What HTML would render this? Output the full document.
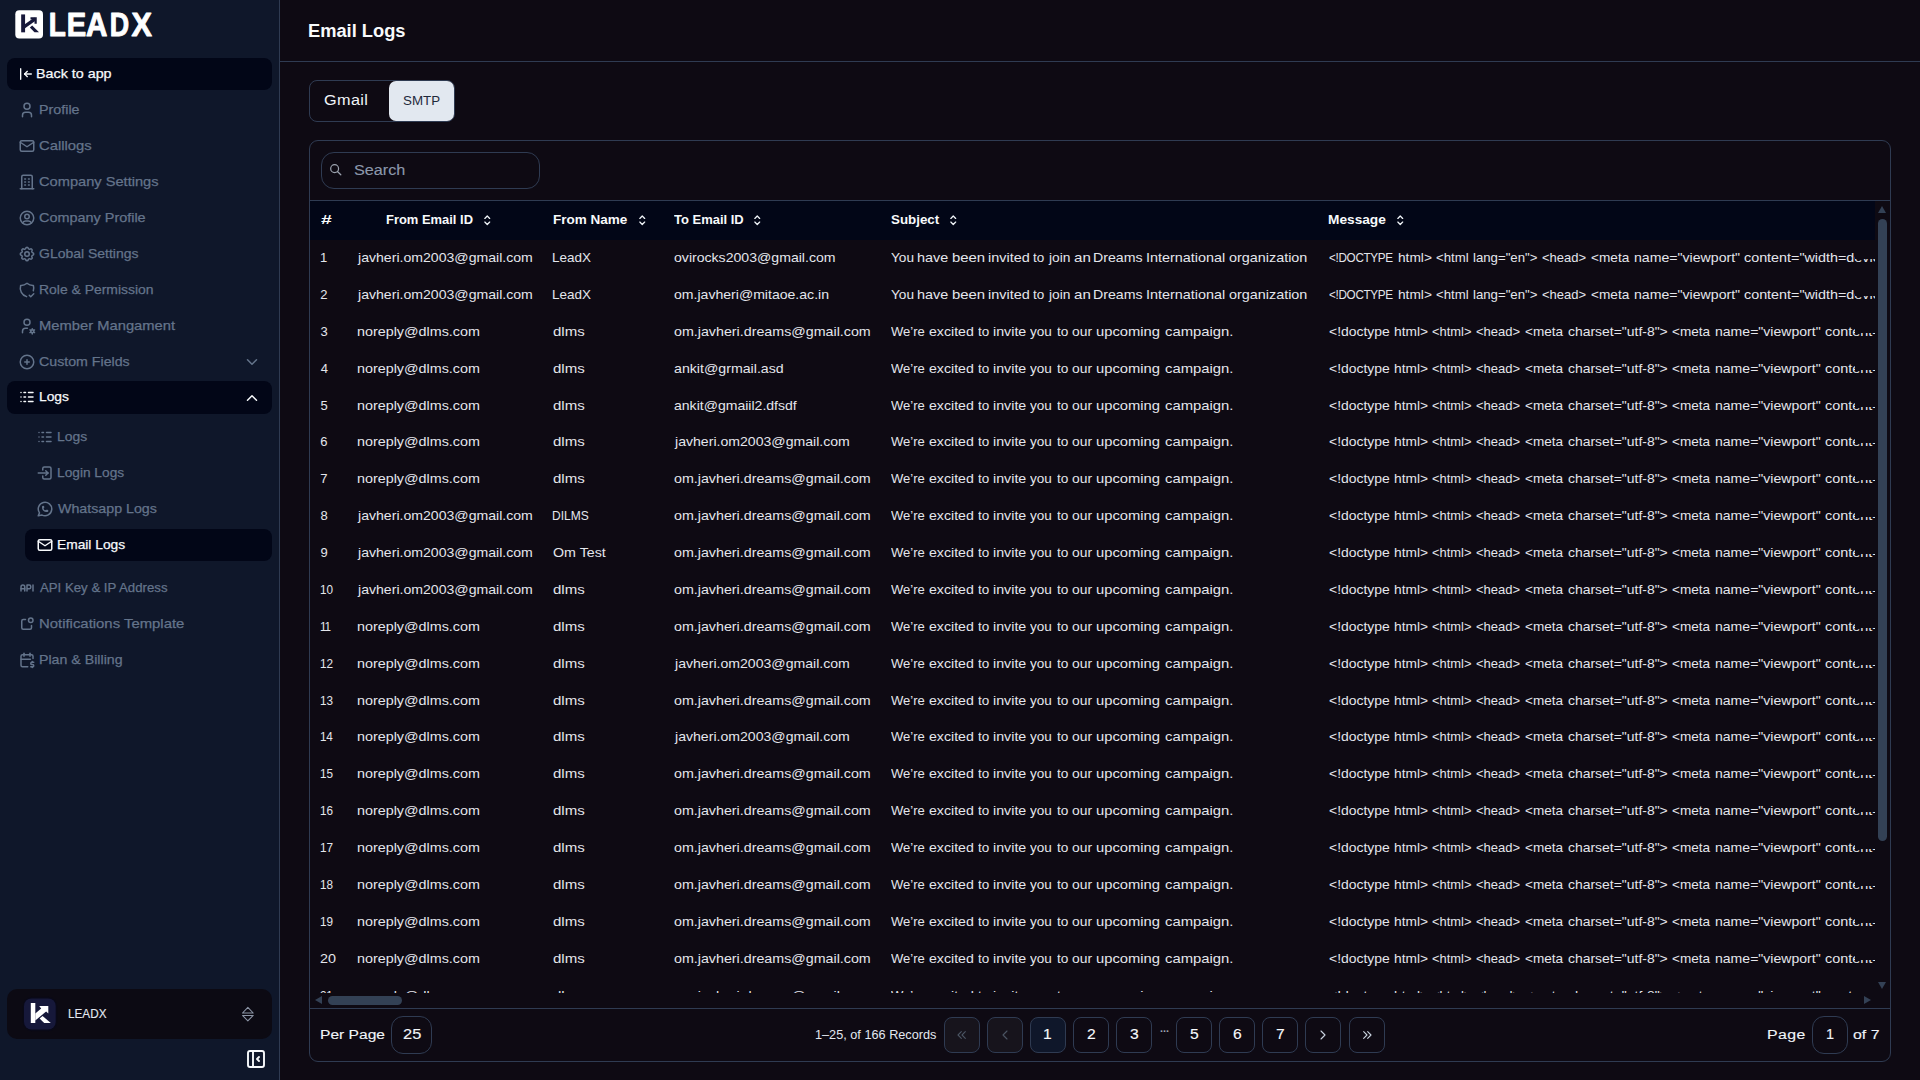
<!DOCTYPE html>
<html lang="en"><head><meta charset="utf-8"><title>Email Logs</title>
<style>
*{box-sizing:border-box;margin:0;padding:0}
html,body{width:1920px;height:1080px;overflow:hidden;background:#0e0a13;font-family:"Liberation Sans",sans-serif;font-variant-ligatures:none}
body{position:relative}
svg,.t,.act,.box,.pb{position:absolute}
svg{display:block;overflow:visible}
.t{white-space:pre;line-height:20px;height:20px;display:block;transform-origin:0 0}
.md{-webkit-text-stroke:0.12px currentColor}
.ms{-webkit-text-stroke:0.25px currentColor}
#side{position:absolute;left:0;top:0;width:280px;height:1080px;background:#0f172a;border-right:1px solid #2f3b52}
.act{height:32px;background:#020617;border-radius:8px}
#org{position:absolute;left:7px;top:989px;width:265px;height:50px;background:#0c0a13;border-radius:10px}
#hdrline{position:absolute;left:280px;top:61px;width:1640px;height:1px;background:#2f3b52}
#tabs{position:absolute;left:309px;top:80px;width:146px;height:42px;border:1px solid #2f3b52;border-radius:8px}
#tabact{position:absolute;left:79px;top:0;width:65px;height:40px;background:#e2e8f0;border-radius:7px}
#card{position:absolute;left:309px;top:140px;width:1582px;height:922px;border:1px solid #2f3b52;border-radius:9px}
#search{position:absolute;left:321px;top:152px;width:219px;height:37px;border:1px solid #2f3b52;border-radius:13px}
#thead{position:absolute;left:310px;top:200px;width:1580px;height:40px;border-top:1px solid #2f3b52;background:linear-gradient(#020617,#020617) no-repeat 0 0/1565px 100%}
#tbody{position:absolute;left:310px;top:201px;width:1565px;height:792px;overflow:hidden}
#vsb{position:absolute;left:1875px;top:201px;width:15px;height:792px}
#vsb b{position:absolute;left:3px;top:18px;width:9px;height:622px;border-radius:5px;background:#334155}
#vsb i,#hsb i{position:absolute;width:0;height:0;border:4.5px solid transparent}
#vsb .up{left:3px;top:0.5px;border-bottom:7px solid #334155;border-top-width:4.5px}
#vsb .dn{left:3px;top:781px;border-top:7px solid #334155;border-bottom-width:0}
#hsb{position:absolute;left:310px;top:993px;width:1565px;height:15px}
#hsb b{position:absolute;left:18px;top:3px;width:74px;height:9px;border-radius:5px;background:#334155}
#hsb .lf{left:4.6px;top:3px;border-right:7px solid #334155;border-left-width:0}
#hsb .rt{left:1553.5px;top:3px;border-left:7px solid #334155;border-right-width:0}
#footline{position:absolute;left:310px;top:1008px;width:1580px;height:1px;background:#2f3b52}
.clip{position:absolute;left:1544.5px;width:21px;height:9.7px;background:#0e0a13}
.box{border:1px solid #2f3b52}
.pb{top:1017px;width:36px;height:36px;border:1px solid #2f3b52;border-radius:8px}
.pa{background:#0f172a}
.pd{background:#17141c}
</style></head>
<body>
<div id="side">
<svg style="left:15px;top:10px" width="140" height="30" viewBox="0 0 140 30">
<rect x="0.3" y="0.3" width="27.7" height="28.3" rx="4" fill="#fff"/>
<g fill="#17183a"><rect x="6.17" y="4.42" width="3.91" height="17.91"/>
<path d="M8 17.7 20.3 8.8" stroke="#17183a" stroke-width="3.3" fill="none"/>
<path d="M15.5 7.33H21.75V13.75H19.5V9.58H15.5z"/>
<path d="M14.83 17.58 17.17 15.5 24 22.33H19.5z"/></g>
<g font-family="Liberation Sans" font-weight="700" font-size="33.14" fill="#fff" stroke="#fff" stroke-width="1.0" stroke-linejoin="round"><text transform="translate(33.75,25.60) scale(0.8437,1)">L</text><text transform="translate(51.77,25.60) scale(0.8806,1)">E</text><text transform="translate(71.09,25.60) scale(0.8936,1)">A</text><text transform="translate(94.63,25.60) scale(0.8096,1)">D</text><text transform="translate(116.56,25.60) scale(0.9224,1)">X</text></g>
</svg>
<div class="act" style="left:7px;top:58px;width:265px"></div>
<svg style="left:17.8px;top:66.4px;color:#f8fafc;" width="16" height="16" viewBox="0 0 24 24" fill="none" stroke="currentColor" stroke-width="2" stroke-linecap="round" stroke-linejoin="round"><path d="M10 12l10 0"/><path d="M10 12l4 4"/><path d="M10 12l4 -4"/><path d="M4 4l0 16"/></svg>
<span class="t ms" style="left:36.03px;top:64px;font-size:13.2px;transform:scaleX(1.0848);color:#f8fafc;">Back to app</span>
<svg style="left:18px;top:101px;color:#64748b;" width="18" height="18" viewBox="0 0 24 24" fill="none" stroke="currentColor" stroke-width="2" stroke-linecap="round" stroke-linejoin="round"><path d="M8 7a4 4 0 1 0 8 0a4 4 0 0 0 -8 0"/><path d="M6 21v-2a4 4 0 0 1 4 -4h4a4 4 0 0 1 4 4v2"/></svg>
<span class="t ms" style="left:38.63px;top:100px;font-size:13.6px;transform:scaleX(1.0512);color:#64748b;">Profile</span>
<svg style="left:18px;top:137px;color:#64748b;" width="18" height="18" viewBox="0 0 24 24" fill="none" stroke="currentColor" stroke-width="2" stroke-linecap="round" stroke-linejoin="round"><path d="M3 7a2 2 0 0 1 2 -2h14a2 2 0 0 1 2 2v10a2 2 0 0 1 -2 2h-14a2 2 0 0 1 -2 -2v-10z"/><path d="M3 7l9 6l9 -6"/></svg>
<span class="t ms" style="left:39.06px;top:136px;font-size:13.6px;transform:scaleX(1.0913);color:#64748b;">Calllogs</span>
<svg style="left:18px;top:173px;color:#64748b;" width="18" height="18" viewBox="0 0 24 24" fill="none" stroke="currentColor" stroke-width="2" stroke-linecap="round" stroke-linejoin="round"><path d="M3 21l18 0"/><path d="M9 8l1 0"/><path d="M9 12l1 0"/><path d="M9 16l1 0"/><path d="M14 8l1 0"/><path d="M14 12l1 0"/><path d="M14 16l1 0"/><path d="M5 21v-16a2 2 0 0 1 2 -2h10a2 2 0 0 1 2 2v16"/></svg>
<span class="t ms" style="left:39.07px;top:172px;font-size:13.6px;transform:scaleX(1.0763);color:#64748b;">Company Settings</span>
<svg style="left:18px;top:209px;color:#64748b;" width="18" height="18" viewBox="0 0 24 24" fill="none" stroke="currentColor" stroke-width="2" stroke-linecap="round" stroke-linejoin="round"><path d="M12 12m-9 0a9 9 0 1 0 18 0a9 9 0 1 0 -18 0"/><path d="M12 10m-3 0a3 3 0 1 0 6 0a3 3 0 1 0 -6 0"/><path d="M6.168 18.849a4 4 0 0 1 3.832 -2.849h4a4 4 0 0 1 3.834 2.855"/></svg>
<span class="t ms" style="left:39.08px;top:208px;font-size:13.6px;transform:scaleX(1.0613);color:#64748b;">Company Profile</span>
<svg style="left:18px;top:245px;color:#64748b;" width="18" height="18" viewBox="0 0 24 24" fill="none" stroke="currentColor" stroke-width="2" stroke-linecap="round" stroke-linejoin="round"><path d="M10.325 4.317c.426 -1.756 2.924 -1.756 3.35 0a1.724 1.724 0 0 0 2.573 1.066c1.543 -.94 3.31 .826 2.37 2.37a1.724 1.724 0 0 0 1.065 2.572c1.756 .426 1.756 2.924 0 3.35a1.724 1.724 0 0 0 -1.066 2.573c.94 1.543 -.826 3.31 -2.37 2.37a1.724 1.724 0 0 0 -2.572 1.065c-.426 1.756 -2.924 1.756 -3.35 0a1.724 1.724 0 0 0 -2.573 -1.066c-1.543 .94 -3.31 -.826 -2.37 -2.37a1.724 1.724 0 0 0 -1.065 -2.572c-1.756 -.426 -1.756 -2.924 0 -3.35a1.724 1.724 0 0 0 1.066 -2.573c-.94 -1.543 .826 -3.31 2.37 -2.37c1 .608 2.296 .07 2.572 -1.065z"/><path d="M9 12a3 3 0 1 0 6 0a3 3 0 0 0 -6 0"/></svg>
<span class="t ms" style="left:39.1px;top:244px;font-size:13.6px;transform:scaleX(1.0286);color:#64748b;">GLobal Settings</span>
<svg style="left:18px;top:281px;color:#64748b;" width="18" height="18" viewBox="0 0 24 24" fill="none" stroke="currentColor" stroke-width="2" stroke-linecap="round" stroke-linejoin="round"><path d="M11.46 20.846a12 12 0 0 1 -7.96 -14.846a12 12 0 0 0 8.5 -3a12 12 0 0 0 8.5 3a12 12 0 0 1 -.09 7.06"/><path d="M15 19l2 2l4 -4"/></svg>
<span class="t ms" style="left:38.66px;top:280px;font-size:13.6px;transform:scaleX(1.0244);color:#64748b;">Role &amp; Permission</span>
<svg style="left:18px;top:317px;color:#64748b;" width="18" height="18" viewBox="0 0 24 24" fill="none" stroke="currentColor" stroke-width="2" stroke-linecap="round" stroke-linejoin="round"><path d="M8 7a4 4 0 1 0 8 0a4 4 0 0 0 -8 0"/><path d="M6 21v-2a4 4 0 0 1 4 -4h2.5"/><path d="M19.001 19m-2 0a2 2 0 1 0 4 0a2 2 0 1 0 -4 0"/><path d="M19.001 15.5v1.5"/><path d="M19.001 21v1.5"/><path d="M22.032 17.25l-1.299 .75"/><path d="M17.27 20l-1.3 .75"/><path d="M15.97 17.25l1.3 .75"/><path d="M20.733 20l1.3 .75"/></svg>
<span class="t ms" style="left:38.59px;top:316px;font-size:13.6px;transform:scaleX(1.0852);color:#64748b;">Member Mangament</span>
<svg style="left:18px;top:353px;color:#64748b;" width="18" height="18" viewBox="0 0 24 24" fill="none" stroke="currentColor" stroke-width="2" stroke-linecap="round" stroke-linejoin="round"><path d="M3 12a9 9 0 1 0 18 0a9 9 0 0 0 -18 0"/><path d="M9 12h6"/><path d="M12 9v6"/></svg>
<span class="t ms" style="left:39.09px;top:352px;font-size:13.6px;transform:scaleX(1.0443);color:#64748b;">Custom Fields</span>
<svg style="left:243px;top:353px;color:#64748b;" width="18" height="18" viewBox="0 0 24 24" fill="none" stroke="currentColor" stroke-width="2" stroke-linecap="round" stroke-linejoin="round"><path d="M6 9l6 6l6 -6"/></svg>
<div class="act" style="left:7px;top:381px;width:265px;height:33px"></div>
<svg style="left:18px;top:388px;color:#f8fafc;" width="18" height="18" viewBox="0 0 24 24" fill="none" stroke="currentColor" stroke-width="2" stroke-linecap="round" stroke-linejoin="round"><path d="M4 12h.01"/><path d="M4 6h.01"/><path d="M4 18h.01"/><path d="M8 18h2"/><path d="M8 12h2"/><path d="M8 6h2"/><path d="M14 6h6"/><path d="M14 12h6"/><path d="M14 18h6"/></svg>
<span class="t ms" style="left:38.67px;top:387px;font-size:13.6px;transform:scaleX(1.0151);color:#f8fafc;">Logs</span>
<svg style="left:243px;top:388.5px;color:#f8fafc;" width="18" height="18" viewBox="0 0 24 24" fill="none" stroke="currentColor" stroke-width="2" stroke-linecap="round" stroke-linejoin="round"><path d="M6 15l6 -6l6 6"/></svg>
<svg style="left:36px;top:428px;color:#64748b;" width="18" height="18" viewBox="0 0 24 24" fill="none" stroke="currentColor" stroke-width="2" stroke-linecap="round" stroke-linejoin="round"><path d="M4 12h.01"/><path d="M4 6h.01"/><path d="M4 18h.01"/><path d="M8 18h2"/><path d="M8 12h2"/><path d="M8 6h2"/><path d="M14 6h6"/><path d="M14 12h6"/><path d="M14 18h6"/></svg>
<span class="t ms" style="left:56.86px;top:427px;font-size:13.6px;transform:scaleX(1.0223);color:#64748b;">Logs</span>
<svg style="left:36px;top:464px;color:#64748b;" width="18" height="18" viewBox="0 0 24 24" fill="none" stroke="currentColor" stroke-width="2" stroke-linecap="round" stroke-linejoin="round"><path d="M9 8v-2a2 2 0 0 1 2 -2h7a2 2 0 0 1 2 2v12a2 2 0 0 1 -2 2h-7a2 2 0 0 1 -2 -2v-2"/><path d="M3 12h13l-3 -3"/><path d="M13 15l3 -3"/></svg>
<span class="t ms" style="left:56.87px;top:463px;font-size:13.6px;transform:scaleX(1.0091);color:#64748b;">Login Logs</span>
<svg style="left:36px;top:500px;color:#64748b;" width="18" height="18" viewBox="0 0 24 24" fill="none" stroke="currentColor" stroke-width="2" stroke-linecap="round" stroke-linejoin="round"><path d="M3 21l1.65 -3.8a9 9 0 1 1 3.4 2.9l-5.05 .9"/><path d="M9 10a.5 .5 0 0 0 1 0v-1a.5 .5 0 0 0 -1 0v1a5 5 0 0 0 5 5h1a.5 .5 0 0 0 0 -1h-1a.5 .5 0 0 0 0 1"/></svg>
<span class="t ms" style="left:57.94px;top:499px;font-size:13.6px;transform:scaleX(1.0466);color:#64748b;">Whatsapp Logs</span>
<div class="act" style="left:25px;top:529px;width:247px"></div>
<svg style="left:36px;top:536px;color:#f8fafc;" width="18" height="18" viewBox="0 0 24 24" fill="none" stroke="currentColor" stroke-width="2" stroke-linecap="round" stroke-linejoin="round"><path d="M3 7a2 2 0 0 1 2 -2h14a2 2 0 0 1 2 2v10a2 2 0 0 1 -2 2h-14a2 2 0 0 1 -2 -2v-10z"/><path d="M3 7l9 6l9 -6"/></svg>
<span class="t ms" style="left:56.87px;top:535px;font-size:13.6px;transform:scaleX(1.013);color:#f8fafc;">Email Logs</span>
<svg style="left:18px;top:579px;color:#64748b;" width="18" height="18" viewBox="0 0 24 24" fill="none" stroke="currentColor" stroke-width="2" stroke-linecap="round" stroke-linejoin="round"><path d="M4 13h5"/><path d="M12 16v-8h3a2 2 0 0 1 2 2v1a2 2 0 0 1 -2 2h-3"/><path d="M20 8v8"/><path d="M9 16v-5.5a2.5 2.5 0 0 0 -5 0v5.5"/></svg>
<span class="t ms" style="left:40.17px;top:578px;font-size:13.6px;transform:scaleX(0.9716);color:#64748b;">API Key &amp; IP Address</span>
<svg style="left:18px;top:615px;color:#64748b;" width="18" height="18" viewBox="0 0 24 24" fill="none" stroke="currentColor" stroke-width="2" stroke-linecap="round" stroke-linejoin="round"><path d="M10 6h-3a2 2 0 0 0 -2 2v9a2 2 0 0 0 2 2h9a2 2 0 0 0 2 -2v-3"/><path d="M17 7m-3 0a3 3 0 1 0 6 0a3 3 0 1 0 -6 0"/></svg>
<span class="t ms" style="left:38.58px;top:614px;font-size:13.6px;transform:scaleX(1.0953);color:#64748b;">Notifications Template</span>
<svg style="left:18px;top:651px;color:#64748b;" width="18" height="18" viewBox="0 0 24 24" fill="none" stroke="currentColor" stroke-width="2" stroke-linecap="round" stroke-linejoin="round"><path d="M13 21h-7a2 2 0 0 1 -2 -2v-12a2 2 0 0 1 2 -2h12a2 2 0 0 1 2 2v3"/><path d="M16 3v4"/><path d="M8 3v4"/><path d="M4 11h12.5"/><path d="M21 15h-2.5a1.5 1.5 0 0 0 0 3h1a1.5 1.5 0 0 1 0 3h-2.5"/><path d="M19 21v1m0 -8v1"/></svg>
<span class="t ms" style="left:38.64px;top:650px;font-size:13.6px;transform:scaleX(1.0432);color:#64748b;">Plan &amp; Billing</span>
<div id="org"></div>
<svg style="left:22px;top:996px" width="36" height="36" viewBox="-2 -2 36 36">
<rect x="-1.2" y="-1.2" width="34.4" height="34.4" rx="9" fill="#080a1c" opacity=".55"/>
<rect x="0" y="0.4" width="31.7" height="31" rx="7.5" fill="#16183a"/>
<g fill="#fff"><rect x="6.8" y="5" width="4.5" height="20"/>
<path d="M11.3 15.6 17.2 10.4 15.2 8H24.3v7.6l-2.2-2.2-10.8 9.2z"/>
<path d="M15.6 20.6 18.6 18 26.8 25H20.2z"/></g>
</svg>
<span class="t md" style="left:67.94px;top:1004px;font-size:13px;transform:scaleX(0.9031);color:#e2e8f0;">LEADX</span>
<svg style="left:240px;top:1004px;color:#8c95a6" width="16" height="20" viewBox="0 0 16 20" fill="none" stroke="currentColor" stroke-width="1.05" stroke-linejoin="round"><path d="M7.85 3.3 13.2 9H2.5z"/><path d="M7.85 16.9 13.2 11.4H2.5z"/></svg>
<svg style="left:243.5px;top:1046.5px;color:#f8fafc;" width="24" height="24" viewBox="0 0 24 24" fill="none" stroke="currentColor" stroke-width="1.9" stroke-linecap="round" stroke-linejoin="round"><path d="M4 4m0 2a2 2 0 0 1 2 -2h12a2 2 0 0 1 2 2v12a2 2 0 0 1 -2 2h-12a2 2 0 0 1 -2 -2z"/><path d="M9 4v16"/><path d="M15 10l-2 2l2 2"/></svg>
</div>
<div id="hdrline"></div>
<span class="t" style="left:308.19px;top:21px;font-size:18px;font-weight:700;transform:scaleX(1.0157);color:#f8fafc;">Email Logs</span>
<div id="tabs"><div id="tabact"></div></div>
<span class="t" style="left:323.89px;top:90px;font-size:14px;letter-spacing:0.318px;transform:scaleX(1.16);color:#f1f5f9;">Gmail</span>
<span class="t" style="left:403.0px;top:91px;font-size:13.7px;transform:scaleX(0.9754);color:#1e293b;">SMTP</span>
<div id="card"></div>
<div id="search"></div>
<svg style="left:329.3px;top:163.3px;color:#9ca3af;" width="13.5" height="13.5" viewBox="0 0 24 24" fill="none" stroke="currentColor" stroke-width="2.2" stroke-linecap="round" stroke-linejoin="round"><path d="M10 10m-7 0a7 7 0 1 0 14 0a7 7 0 1 0 -14 0"/><path d="M21 21l-6 -6"/></svg>
<span class="t md" style="left:353.67px;top:160px;font-size:14.7px;transform:scaleX(1.1036);color:#8c98ab;">Search</span>
<div id="thead"></div>
<span class="t" style="left:320.67px;top:210px;font-size:12.6px;font-weight:700;transform:scaleX(1.543);color:#f8fafc;">#</span>
<span class="t" style="left:386.05px;top:210px;font-size:12.6px;font-weight:700;transform:scaleX(1.0272);color:#f8fafc;">From Email ID</span>
<svg style="left:479.95px;top:213.05px;color:#f1f5f9;" width="14.5" height="14.5" viewBox="0 0 24 24" fill="none" stroke="currentColor" stroke-width="2.1" stroke-linecap="round" stroke-linejoin="round"><path d="M8 9l4 -4l4 4"/><path d="M16 15l-4 4l-4 -4"/></svg>
<span class="t" style="left:553.11px;top:210px;font-size:12.6px;font-weight:700;transform:scaleX(1.073);color:#f8fafc;">From Name</span>
<svg style="left:635.0px;top:213.05px;color:#f1f5f9;" width="14.5" height="14.5" viewBox="0 0 24 24" fill="none" stroke="currentColor" stroke-width="2.1" stroke-linecap="round" stroke-linejoin="round"><path d="M8 9l4 -4l4 4"/><path d="M16 15l-4 4l-4 -4"/></svg>
<span class="t" style="left:674.06px;top:210px;font-size:12.6px;font-weight:700;transform:scaleX(1.0299);color:#f8fafc;">To Email ID</span>
<svg style="left:750.0px;top:213.05px;color:#f1f5f9;" width="14.5" height="14.5" viewBox="0 0 24 24" fill="none" stroke="currentColor" stroke-width="2.1" stroke-linecap="round" stroke-linejoin="round"><path d="M8 9l4 -4l4 4"/><path d="M16 15l-4 4l-4 -4"/></svg>
<span class="t" style="left:890.63px;top:210px;font-size:12.6px;font-weight:700;transform:scaleX(1.0601);color:#f8fafc;">Subject</span>
<svg style="left:946.0px;top:213.05px;color:#f1f5f9;" width="14.5" height="14.5" viewBox="0 0 24 24" fill="none" stroke="currentColor" stroke-width="2.1" stroke-linecap="round" stroke-linejoin="round"><path d="M8 9l4 -4l4 4"/><path d="M16 15l-4 4l-4 -4"/></svg>
<span class="t" style="left:1328.1px;top:210px;font-size:12.6px;font-weight:700;transform:scaleX(1.0874);color:#f8fafc;">Message</span>
<svg style="left:1392.95px;top:213.05px;color:#f1f5f9;" width="14.5" height="14.5" viewBox="0 0 24 24" fill="none" stroke="currentColor" stroke-width="2.1" stroke-linecap="round" stroke-linejoin="round"><path d="M8 9l4 -4l4 4"/><path d="M16 15l-4 4l-4 -4"/></svg>
<div id="tbody">
<span class="t" style="left:10.01px;top:47px;font-size:13px;color:#e4e6ec;">1</span>
<span class="t" style="left:47.55px;top:47px;font-size:13px;transform:scaleX(1.0839);color:#e4e6ec;">javheri.om2003@gmail.com</span>
<span class="t" style="left:242.1px;top:47px;font-size:13px;transform:scaleX(1.0343);color:#e4e6ec;">LeadX</span>
<span class="t" style="left:363.61px;top:47px;font-size:13px;transform:scaleX(1.0837);color:#e4e6ec;">ovirocks2003@gmail.com</span>
<span class="t" style="left:581.05px;top:47px;font-size:13px;transform:scaleX(1.0485);color:#e4e6ec;">You</span>
<span class="t" style="left:607.16px;top:47px;font-size:13px;transform:scaleX(1.1073);color:#e4e6ec;">have</span>
<span class="t" style="left:641.6px;top:47px;font-size:13px;transform:scaleX(1.1447);color:#e4e6ec;">been</span>
<span class="t" style="left:677.6px;top:47px;font-size:13px;transform:scaleX(1.1091);color:#e4e6ec;">invited</span>
<span class="t" style="left:723.25px;top:47px;font-size:13px;transform:scaleX(1.0382);color:#e4e6ec;">to</span>
<span class="t" style="left:739.09px;top:47px;font-size:13px;transform:scaleX(1.0587);color:#e4e6ec;">join</span>
<span class="t" style="left:764.02px;top:47px;font-size:13px;letter-spacing:0.015px;transform:scaleX(1.16);color:#e4e6ec;">an</span>
<span class="t" style="left:783.49px;top:47px;font-size:13px;transform:scaleX(1.0891);color:#e4e6ec;">Dreams</span>
<span class="t" style="left:836.03px;top:47px;font-size:13px;transform:scaleX(1.1078);color:#e4e6ec;">International</span>
<span class="t" style="left:918.75px;top:47px;font-size:13px;transform:scaleX(1.1059);color:#e4e6ec;">organization</span>
<span class="t" style="left:1019.18px;top:47px;font-size:13px;letter-spacing:-0.344px;transform:scaleX(0.9);color:#e4e6ec;">&lt;!DOCTYPE</span>
<span class="t" style="left:1087.5px;top:47px;font-size:13px;transform:scaleX(1.0543);color:#e4e6ec;">html&gt;</span>
<span class="t" style="left:1126.1px;top:47px;font-size:13px;transform:scaleX(1.0144);color:#e4e6ec;">&lt;html</span>
<span class="t" style="left:1163.37px;top:47px;font-size:13px;transform:scaleX(1.0152);color:#e4e6ec;">lang="en"&gt;</span>
<span class="t" style="left:1232.41px;top:47px;font-size:13px;transform:scaleX(0.9989);color:#e4e6ec;">&lt;head&gt;</span>
<span class="t" style="left:1281.48px;top:47px;font-size:13px;transform:scaleX(1.0481);color:#e4e6ec;">&lt;meta</span>
<span class="t" style="left:1324.12px;top:47px;font-size:13px;transform:scaleX(1.0857);color:#e4e6ec;">name="viewport"</span>
<span class="t" style="left:1433.85px;top:47px;font-size:13px;transform:scaleX(1.1032);color:#e4e6ec;">content="width=device</span>
<i class="clip" style="top:48px"></i>
<span class="t" style="left:10.35px;top:84px;font-size:13px;color:#e4e6ec;">2</span>
<span class="t" style="left:47.55px;top:84px;font-size:13px;transform:scaleX(1.0839);color:#e4e6ec;">javheri.om2003@gmail.com</span>
<span class="t" style="left:242.1px;top:84px;font-size:13px;transform:scaleX(1.0343);color:#e4e6ec;">LeadX</span>
<span class="t" style="left:363.61px;top:84px;font-size:13px;transform:scaleX(1.0819);color:#e4e6ec;">om.javheri@mitaoe.ac.in</span>
<span class="t" style="left:581.05px;top:84px;font-size:13px;transform:scaleX(1.0485);color:#e4e6ec;">You</span>
<span class="t" style="left:607.16px;top:84px;font-size:13px;transform:scaleX(1.1073);color:#e4e6ec;">have</span>
<span class="t" style="left:641.6px;top:84px;font-size:13px;transform:scaleX(1.1447);color:#e4e6ec;">been</span>
<span class="t" style="left:677.6px;top:84px;font-size:13px;transform:scaleX(1.1091);color:#e4e6ec;">invited</span>
<span class="t" style="left:723.25px;top:84px;font-size:13px;transform:scaleX(1.0382);color:#e4e6ec;">to</span>
<span class="t" style="left:739.09px;top:84px;font-size:13px;transform:scaleX(1.0587);color:#e4e6ec;">join</span>
<span class="t" style="left:764.02px;top:84px;font-size:13px;letter-spacing:0.015px;transform:scaleX(1.16);color:#e4e6ec;">an</span>
<span class="t" style="left:783.49px;top:84px;font-size:13px;transform:scaleX(1.0891);color:#e4e6ec;">Dreams</span>
<span class="t" style="left:836.03px;top:84px;font-size:13px;transform:scaleX(1.1078);color:#e4e6ec;">International</span>
<span class="t" style="left:918.75px;top:84px;font-size:13px;transform:scaleX(1.1059);color:#e4e6ec;">organization</span>
<span class="t" style="left:1019.18px;top:84px;font-size:13px;letter-spacing:-0.344px;transform:scaleX(0.9);color:#e4e6ec;">&lt;!DOCTYPE</span>
<span class="t" style="left:1087.5px;top:84px;font-size:13px;transform:scaleX(1.0543);color:#e4e6ec;">html&gt;</span>
<span class="t" style="left:1126.1px;top:84px;font-size:13px;transform:scaleX(1.0144);color:#e4e6ec;">&lt;html</span>
<span class="t" style="left:1163.37px;top:84px;font-size:13px;transform:scaleX(1.0152);color:#e4e6ec;">lang="en"&gt;</span>
<span class="t" style="left:1232.41px;top:84px;font-size:13px;transform:scaleX(0.9989);color:#e4e6ec;">&lt;head&gt;</span>
<span class="t" style="left:1281.48px;top:84px;font-size:13px;transform:scaleX(1.0481);color:#e4e6ec;">&lt;meta</span>
<span class="t" style="left:1324.12px;top:84px;font-size:13px;transform:scaleX(1.0857);color:#e4e6ec;">name="viewport"</span>
<span class="t" style="left:1433.85px;top:84px;font-size:13px;transform:scaleX(1.1032);color:#e4e6ec;">content="width=device</span>
<i class="clip" style="top:85px"></i>
<span class="t" style="left:10.51px;top:121px;font-size:13px;color:#e4e6ec;">3</span>
<span class="t" style="left:46.75px;top:121px;font-size:13px;transform:scaleX(1.1025);color:#e4e6ec;">noreply@dlms.com</span>
<span class="t" style="left:242.57px;top:121px;font-size:13px;transform:scaleX(1.1574);color:#e4e6ec;">dlms</span>
<span class="t" style="left:363.6px;top:121px;font-size:13px;transform:scaleX(1.0968);color:#e4e6ec;">om.javheri.dreams@gmail.com</span>
<span class="t" style="left:581.3px;top:121px;font-size:13px;transform:scaleX(1.0032);color:#e4e6ec;">We’re</span>
<span class="t" style="left:619.06px;top:121px;font-size:13px;transform:scaleX(1.0873);color:#e4e6ec;">excited</span>
<span class="t" style="left:667.55px;top:121px;font-size:13px;transform:scaleX(1.0382);color:#e4e6ec;">to</span>
<span class="t" style="left:682.81px;top:121px;font-size:13px;transform:scaleX(1.0958);color:#e4e6ec;">invite</span>
<span class="t" style="left:720.42px;top:121px;font-size:13px;transform:scaleX(1.0407);color:#e4e6ec;">you</span>
<span class="t" style="left:746.55px;top:121px;font-size:13px;transform:scaleX(1.0481);color:#e4e6ec;">to</span>
<span class="t" style="left:762.27px;top:121px;font-size:13px;transform:scaleX(1.0641);color:#e4e6ec;">our</span>
<span class="t" style="left:786.41px;top:121px;font-size:13px;transform:scaleX(1.1351);color:#e4e6ec;">upcoming</span>
<span class="t" style="left:854.53px;top:121px;font-size:13px;transform:scaleX(1.1415);color:#e4e6ec;">campaign.</span>
<span class="t" style="left:1019.07px;top:121px;font-size:13px;transform:scaleX(1.0713);color:#e4e6ec;">&lt;!doctype</span>
<span class="t" style="left:1083.9px;top:121px;font-size:13px;transform:scaleX(1.0576);color:#e4e6ec;">html&gt;</span>
<span class="t" style="left:1122.22px;top:121px;font-size:13px;transform:scaleX(0.9925);color:#e4e6ec;">&lt;html&gt;</span>
<span class="t" style="left:1166.41px;top:121px;font-size:13px;transform:scaleX(1.0012);color:#e4e6ec;">&lt;head&gt;</span>
<span class="t" style="left:1215.19px;top:121px;font-size:13px;transform:scaleX(1.0425);color:#e4e6ec;">&lt;meta</span>
<span class="t" style="left:1258.16px;top:121px;font-size:13px;transform:scaleX(1.0719);color:#e4e6ec;">charset="utf-8"&gt;</span>
<span class="t" style="left:1362.39px;top:121px;font-size:13px;transform:scaleX(1.0425);color:#e4e6ec;">&lt;meta</span>
<span class="t" style="left:1405.02px;top:121px;font-size:13px;transform:scaleX(1.0805);color:#e4e6ec;">name="viewport"</span>
<span class="t" style="left:1514.55px;top:121px;font-size:13px;transform:scaleX(1.1076);color:#e4e6ec;">content="w</span>
<i class="clip" style="top:122px"></i>
<span class="t" style="left:10.71px;top:158px;font-size:13px;color:#e4e6ec;">4</span>
<span class="t" style="left:46.75px;top:158px;font-size:13px;transform:scaleX(1.1025);color:#e4e6ec;">noreply@dlms.com</span>
<span class="t" style="left:242.57px;top:158px;font-size:13px;transform:scaleX(1.1574);color:#e4e6ec;">dlms</span>
<span class="t" style="left:363.6px;top:158px;font-size:13px;transform:scaleX(1.0902);color:#e4e6ec;">ankit@grmail.asd</span>
<span class="t" style="left:581.3px;top:158px;font-size:13px;transform:scaleX(1.0032);color:#e4e6ec;">We’re</span>
<span class="t" style="left:619.06px;top:158px;font-size:13px;transform:scaleX(1.0873);color:#e4e6ec;">excited</span>
<span class="t" style="left:667.55px;top:158px;font-size:13px;transform:scaleX(1.0382);color:#e4e6ec;">to</span>
<span class="t" style="left:682.81px;top:158px;font-size:13px;transform:scaleX(1.0958);color:#e4e6ec;">invite</span>
<span class="t" style="left:720.42px;top:158px;font-size:13px;transform:scaleX(1.0407);color:#e4e6ec;">you</span>
<span class="t" style="left:746.55px;top:158px;font-size:13px;transform:scaleX(1.0481);color:#e4e6ec;">to</span>
<span class="t" style="left:762.27px;top:158px;font-size:13px;transform:scaleX(1.0641);color:#e4e6ec;">our</span>
<span class="t" style="left:786.41px;top:158px;font-size:13px;transform:scaleX(1.1351);color:#e4e6ec;">upcoming</span>
<span class="t" style="left:854.53px;top:158px;font-size:13px;transform:scaleX(1.1415);color:#e4e6ec;">campaign.</span>
<span class="t" style="left:1019.07px;top:158px;font-size:13px;transform:scaleX(1.0713);color:#e4e6ec;">&lt;!doctype</span>
<span class="t" style="left:1083.9px;top:158px;font-size:13px;transform:scaleX(1.0576);color:#e4e6ec;">html&gt;</span>
<span class="t" style="left:1122.22px;top:158px;font-size:13px;transform:scaleX(0.9925);color:#e4e6ec;">&lt;html&gt;</span>
<span class="t" style="left:1166.41px;top:158px;font-size:13px;transform:scaleX(1.0012);color:#e4e6ec;">&lt;head&gt;</span>
<span class="t" style="left:1215.19px;top:158px;font-size:13px;transform:scaleX(1.0425);color:#e4e6ec;">&lt;meta</span>
<span class="t" style="left:1258.16px;top:158px;font-size:13px;transform:scaleX(1.0719);color:#e4e6ec;">charset="utf-8"&gt;</span>
<span class="t" style="left:1362.39px;top:158px;font-size:13px;transform:scaleX(1.0425);color:#e4e6ec;">&lt;meta</span>
<span class="t" style="left:1405.02px;top:158px;font-size:13px;transform:scaleX(1.0805);color:#e4e6ec;">name="viewport"</span>
<span class="t" style="left:1514.55px;top:158px;font-size:13px;transform:scaleX(1.1076);color:#e4e6ec;">content="w</span>
<i class="clip" style="top:159px"></i>
<span class="t" style="left:10.48px;top:195px;font-size:13px;color:#e4e6ec;">5</span>
<span class="t" style="left:46.75px;top:195px;font-size:13px;transform:scaleX(1.1025);color:#e4e6ec;">noreply@dlms.com</span>
<span class="t" style="left:242.57px;top:195px;font-size:13px;transform:scaleX(1.1574);color:#e4e6ec;">dlms</span>
<span class="t" style="left:363.61px;top:195px;font-size:13px;transform:scaleX(1.0802);color:#e4e6ec;">ankit@gmaiil2.dfsdf</span>
<span class="t" style="left:581.3px;top:195px;font-size:13px;transform:scaleX(1.0032);color:#e4e6ec;">We’re</span>
<span class="t" style="left:619.06px;top:195px;font-size:13px;transform:scaleX(1.0873);color:#e4e6ec;">excited</span>
<span class="t" style="left:667.55px;top:195px;font-size:13px;transform:scaleX(1.0382);color:#e4e6ec;">to</span>
<span class="t" style="left:682.81px;top:195px;font-size:13px;transform:scaleX(1.0958);color:#e4e6ec;">invite</span>
<span class="t" style="left:720.42px;top:195px;font-size:13px;transform:scaleX(1.0407);color:#e4e6ec;">you</span>
<span class="t" style="left:746.55px;top:195px;font-size:13px;transform:scaleX(1.0481);color:#e4e6ec;">to</span>
<span class="t" style="left:762.27px;top:195px;font-size:13px;transform:scaleX(1.0641);color:#e4e6ec;">our</span>
<span class="t" style="left:786.41px;top:195px;font-size:13px;transform:scaleX(1.1351);color:#e4e6ec;">upcoming</span>
<span class="t" style="left:854.53px;top:195px;font-size:13px;transform:scaleX(1.1415);color:#e4e6ec;">campaign.</span>
<span class="t" style="left:1019.07px;top:195px;font-size:13px;transform:scaleX(1.0713);color:#e4e6ec;">&lt;!doctype</span>
<span class="t" style="left:1083.9px;top:195px;font-size:13px;transform:scaleX(1.0576);color:#e4e6ec;">html&gt;</span>
<span class="t" style="left:1122.22px;top:195px;font-size:13px;transform:scaleX(0.9925);color:#e4e6ec;">&lt;html&gt;</span>
<span class="t" style="left:1166.41px;top:195px;font-size:13px;transform:scaleX(1.0012);color:#e4e6ec;">&lt;head&gt;</span>
<span class="t" style="left:1215.19px;top:195px;font-size:13px;transform:scaleX(1.0425);color:#e4e6ec;">&lt;meta</span>
<span class="t" style="left:1258.16px;top:195px;font-size:13px;transform:scaleX(1.0719);color:#e4e6ec;">charset="utf-8"&gt;</span>
<span class="t" style="left:1362.39px;top:195px;font-size:13px;transform:scaleX(1.0425);color:#e4e6ec;">&lt;meta</span>
<span class="t" style="left:1405.02px;top:195px;font-size:13px;transform:scaleX(1.0805);color:#e4e6ec;">name="viewport"</span>
<span class="t" style="left:1514.55px;top:195px;font-size:13px;transform:scaleX(1.1076);color:#e4e6ec;">content="w</span>
<i class="clip" style="top:196px"></i>
<span class="t" style="left:10.35px;top:231px;font-size:13px;color:#e4e6ec;">6</span>
<span class="t" style="left:46.75px;top:231px;font-size:13px;transform:scaleX(1.1025);color:#e4e6ec;">noreply@dlms.com</span>
<span class="t" style="left:242.57px;top:231px;font-size:13px;transform:scaleX(1.1574);color:#e4e6ec;">dlms</span>
<span class="t" style="left:364.55px;top:231px;font-size:13px;transform:scaleX(1.0839);color:#e4e6ec;">javheri.om2003@gmail.com</span>
<span class="t" style="left:581.3px;top:231px;font-size:13px;transform:scaleX(1.0032);color:#e4e6ec;">We’re</span>
<span class="t" style="left:619.06px;top:231px;font-size:13px;transform:scaleX(1.0873);color:#e4e6ec;">excited</span>
<span class="t" style="left:667.55px;top:231px;font-size:13px;transform:scaleX(1.0382);color:#e4e6ec;">to</span>
<span class="t" style="left:682.81px;top:231px;font-size:13px;transform:scaleX(1.0958);color:#e4e6ec;">invite</span>
<span class="t" style="left:720.42px;top:231px;font-size:13px;transform:scaleX(1.0407);color:#e4e6ec;">you</span>
<span class="t" style="left:746.55px;top:231px;font-size:13px;transform:scaleX(1.0481);color:#e4e6ec;">to</span>
<span class="t" style="left:762.27px;top:231px;font-size:13px;transform:scaleX(1.0641);color:#e4e6ec;">our</span>
<span class="t" style="left:786.41px;top:231px;font-size:13px;transform:scaleX(1.1351);color:#e4e6ec;">upcoming</span>
<span class="t" style="left:854.53px;top:231px;font-size:13px;transform:scaleX(1.1415);color:#e4e6ec;">campaign.</span>
<span class="t" style="left:1019.07px;top:231px;font-size:13px;transform:scaleX(1.0713);color:#e4e6ec;">&lt;!doctype</span>
<span class="t" style="left:1083.9px;top:231px;font-size:13px;transform:scaleX(1.0576);color:#e4e6ec;">html&gt;</span>
<span class="t" style="left:1122.22px;top:231px;font-size:13px;transform:scaleX(0.9925);color:#e4e6ec;">&lt;html&gt;</span>
<span class="t" style="left:1166.41px;top:231px;font-size:13px;transform:scaleX(1.0012);color:#e4e6ec;">&lt;head&gt;</span>
<span class="t" style="left:1215.19px;top:231px;font-size:13px;transform:scaleX(1.0425);color:#e4e6ec;">&lt;meta</span>
<span class="t" style="left:1258.16px;top:231px;font-size:13px;transform:scaleX(1.0719);color:#e4e6ec;">charset="utf-8"&gt;</span>
<span class="t" style="left:1362.39px;top:231px;font-size:13px;transform:scaleX(1.0425);color:#e4e6ec;">&lt;meta</span>
<span class="t" style="left:1405.02px;top:231px;font-size:13px;transform:scaleX(1.0805);color:#e4e6ec;">name="viewport"</span>
<span class="t" style="left:1514.55px;top:231px;font-size:13px;transform:scaleX(1.1076);color:#e4e6ec;">content="w</span>
<i class="clip" style="top:232px"></i>
<span class="t" style="left:10.34px;top:268px;font-size:13px;color:#e4e6ec;">7</span>
<span class="t" style="left:46.75px;top:268px;font-size:13px;transform:scaleX(1.1025);color:#e4e6ec;">noreply@dlms.com</span>
<span class="t" style="left:242.57px;top:268px;font-size:13px;transform:scaleX(1.1574);color:#e4e6ec;">dlms</span>
<span class="t" style="left:363.6px;top:268px;font-size:13px;transform:scaleX(1.0968);color:#e4e6ec;">om.javheri.dreams@gmail.com</span>
<span class="t" style="left:581.3px;top:268px;font-size:13px;transform:scaleX(1.0032);color:#e4e6ec;">We’re</span>
<span class="t" style="left:619.06px;top:268px;font-size:13px;transform:scaleX(1.0873);color:#e4e6ec;">excited</span>
<span class="t" style="left:667.55px;top:268px;font-size:13px;transform:scaleX(1.0382);color:#e4e6ec;">to</span>
<span class="t" style="left:682.81px;top:268px;font-size:13px;transform:scaleX(1.0958);color:#e4e6ec;">invite</span>
<span class="t" style="left:720.42px;top:268px;font-size:13px;transform:scaleX(1.0407);color:#e4e6ec;">you</span>
<span class="t" style="left:746.55px;top:268px;font-size:13px;transform:scaleX(1.0481);color:#e4e6ec;">to</span>
<span class="t" style="left:762.27px;top:268px;font-size:13px;transform:scaleX(1.0641);color:#e4e6ec;">our</span>
<span class="t" style="left:786.41px;top:268px;font-size:13px;transform:scaleX(1.1351);color:#e4e6ec;">upcoming</span>
<span class="t" style="left:854.53px;top:268px;font-size:13px;transform:scaleX(1.1415);color:#e4e6ec;">campaign.</span>
<span class="t" style="left:1019.07px;top:268px;font-size:13px;transform:scaleX(1.0713);color:#e4e6ec;">&lt;!doctype</span>
<span class="t" style="left:1083.9px;top:268px;font-size:13px;transform:scaleX(1.0576);color:#e4e6ec;">html&gt;</span>
<span class="t" style="left:1122.22px;top:268px;font-size:13px;transform:scaleX(0.9925);color:#e4e6ec;">&lt;html&gt;</span>
<span class="t" style="left:1166.41px;top:268px;font-size:13px;transform:scaleX(1.0012);color:#e4e6ec;">&lt;head&gt;</span>
<span class="t" style="left:1215.19px;top:268px;font-size:13px;transform:scaleX(1.0425);color:#e4e6ec;">&lt;meta</span>
<span class="t" style="left:1258.16px;top:268px;font-size:13px;transform:scaleX(1.0719);color:#e4e6ec;">charset="utf-8"&gt;</span>
<span class="t" style="left:1362.39px;top:268px;font-size:13px;transform:scaleX(1.0425);color:#e4e6ec;">&lt;meta</span>
<span class="t" style="left:1405.02px;top:268px;font-size:13px;transform:scaleX(1.0805);color:#e4e6ec;">name="viewport"</span>
<span class="t" style="left:1514.55px;top:268px;font-size:13px;transform:scaleX(1.1076);color:#e4e6ec;">content="w</span>
<i class="clip" style="top:269px"></i>
<span class="t" style="left:10.44px;top:305px;font-size:13px;color:#e4e6ec;">8</span>
<span class="t" style="left:47.55px;top:305px;font-size:13px;transform:scaleX(1.0839);color:#e4e6ec;">javheri.om2003@gmail.com</span>
<span class="t" style="left:242.21px;top:305px;font-size:13px;transform:scaleX(0.9243);color:#e4e6ec;">DILMS</span>
<span class="t" style="left:363.6px;top:305px;font-size:13px;transform:scaleX(1.0968);color:#e4e6ec;">om.javheri.dreams@gmail.com</span>
<span class="t" style="left:581.3px;top:305px;font-size:13px;transform:scaleX(1.0032);color:#e4e6ec;">We’re</span>
<span class="t" style="left:619.06px;top:305px;font-size:13px;transform:scaleX(1.0873);color:#e4e6ec;">excited</span>
<span class="t" style="left:667.55px;top:305px;font-size:13px;transform:scaleX(1.0382);color:#e4e6ec;">to</span>
<span class="t" style="left:682.81px;top:305px;font-size:13px;transform:scaleX(1.0958);color:#e4e6ec;">invite</span>
<span class="t" style="left:720.42px;top:305px;font-size:13px;transform:scaleX(1.0407);color:#e4e6ec;">you</span>
<span class="t" style="left:746.55px;top:305px;font-size:13px;transform:scaleX(1.0481);color:#e4e6ec;">to</span>
<span class="t" style="left:762.27px;top:305px;font-size:13px;transform:scaleX(1.0641);color:#e4e6ec;">our</span>
<span class="t" style="left:786.41px;top:305px;font-size:13px;transform:scaleX(1.1351);color:#e4e6ec;">upcoming</span>
<span class="t" style="left:854.53px;top:305px;font-size:13px;transform:scaleX(1.1415);color:#e4e6ec;">campaign.</span>
<span class="t" style="left:1019.07px;top:305px;font-size:13px;transform:scaleX(1.0713);color:#e4e6ec;">&lt;!doctype</span>
<span class="t" style="left:1083.9px;top:305px;font-size:13px;transform:scaleX(1.0576);color:#e4e6ec;">html&gt;</span>
<span class="t" style="left:1122.22px;top:305px;font-size:13px;transform:scaleX(0.9925);color:#e4e6ec;">&lt;html&gt;</span>
<span class="t" style="left:1166.41px;top:305px;font-size:13px;transform:scaleX(1.0012);color:#e4e6ec;">&lt;head&gt;</span>
<span class="t" style="left:1215.19px;top:305px;font-size:13px;transform:scaleX(1.0425);color:#e4e6ec;">&lt;meta</span>
<span class="t" style="left:1258.16px;top:305px;font-size:13px;transform:scaleX(1.0719);color:#e4e6ec;">charset="utf-8"&gt;</span>
<span class="t" style="left:1362.39px;top:305px;font-size:13px;transform:scaleX(1.0425);color:#e4e6ec;">&lt;meta</span>
<span class="t" style="left:1405.02px;top:305px;font-size:13px;transform:scaleX(1.0805);color:#e4e6ec;">name="viewport"</span>
<span class="t" style="left:1514.55px;top:305px;font-size:13px;transform:scaleX(1.1076);color:#e4e6ec;">content="w</span>
<i class="clip" style="top:306px"></i>
<span class="t" style="left:10.4px;top:342px;font-size:13px;color:#e4e6ec;">9</span>
<span class="t" style="left:47.55px;top:342px;font-size:13px;transform:scaleX(1.0839);color:#e4e6ec;">javheri.om2003@gmail.com</span>
<span class="t" style="left:242.53px;top:342px;font-size:13px;transform:scaleX(1.0954);color:#e4e6ec;">Om Test</span>
<span class="t" style="left:363.6px;top:342px;font-size:13px;transform:scaleX(1.0968);color:#e4e6ec;">om.javheri.dreams@gmail.com</span>
<span class="t" style="left:581.3px;top:342px;font-size:13px;transform:scaleX(1.0032);color:#e4e6ec;">We’re</span>
<span class="t" style="left:619.06px;top:342px;font-size:13px;transform:scaleX(1.0873);color:#e4e6ec;">excited</span>
<span class="t" style="left:667.55px;top:342px;font-size:13px;transform:scaleX(1.0382);color:#e4e6ec;">to</span>
<span class="t" style="left:682.81px;top:342px;font-size:13px;transform:scaleX(1.0958);color:#e4e6ec;">invite</span>
<span class="t" style="left:720.42px;top:342px;font-size:13px;transform:scaleX(1.0407);color:#e4e6ec;">you</span>
<span class="t" style="left:746.55px;top:342px;font-size:13px;transform:scaleX(1.0481);color:#e4e6ec;">to</span>
<span class="t" style="left:762.27px;top:342px;font-size:13px;transform:scaleX(1.0641);color:#e4e6ec;">our</span>
<span class="t" style="left:786.41px;top:342px;font-size:13px;transform:scaleX(1.1351);color:#e4e6ec;">upcoming</span>
<span class="t" style="left:854.53px;top:342px;font-size:13px;transform:scaleX(1.1415);color:#e4e6ec;">campaign.</span>
<span class="t" style="left:1019.07px;top:342px;font-size:13px;transform:scaleX(1.0713);color:#e4e6ec;">&lt;!doctype</span>
<span class="t" style="left:1083.9px;top:342px;font-size:13px;transform:scaleX(1.0576);color:#e4e6ec;">html&gt;</span>
<span class="t" style="left:1122.22px;top:342px;font-size:13px;transform:scaleX(0.9925);color:#e4e6ec;">&lt;html&gt;</span>
<span class="t" style="left:1166.41px;top:342px;font-size:13px;transform:scaleX(1.0012);color:#e4e6ec;">&lt;head&gt;</span>
<span class="t" style="left:1215.19px;top:342px;font-size:13px;transform:scaleX(1.0425);color:#e4e6ec;">&lt;meta</span>
<span class="t" style="left:1258.16px;top:342px;font-size:13px;transform:scaleX(1.0719);color:#e4e6ec;">charset="utf-8"&gt;</span>
<span class="t" style="left:1362.39px;top:342px;font-size:13px;transform:scaleX(1.0425);color:#e4e6ec;">&lt;meta</span>
<span class="t" style="left:1405.02px;top:342px;font-size:13px;transform:scaleX(1.0805);color:#e4e6ec;">name="viewport"</span>
<span class="t" style="left:1514.55px;top:342px;font-size:13px;transform:scaleX(1.1076);color:#e4e6ec;">content="w</span>
<i class="clip" style="top:343px"></i>
<span class="t" style="left:10.11px;top:379px;font-size:13px;letter-spacing:-0.096px;transform:scaleX(0.9);color:#e4e6ec;">10</span>
<span class="t" style="left:47.55px;top:379px;font-size:13px;transform:scaleX(1.0839);color:#e4e6ec;">javheri.om2003@gmail.com</span>
<span class="t" style="left:242.57px;top:379px;font-size:13px;transform:scaleX(1.1574);color:#e4e6ec;">dlms</span>
<span class="t" style="left:363.6px;top:379px;font-size:13px;transform:scaleX(1.0968);color:#e4e6ec;">om.javheri.dreams@gmail.com</span>
<span class="t" style="left:581.3px;top:379px;font-size:13px;transform:scaleX(1.0032);color:#e4e6ec;">We’re</span>
<span class="t" style="left:619.06px;top:379px;font-size:13px;transform:scaleX(1.0873);color:#e4e6ec;">excited</span>
<span class="t" style="left:667.55px;top:379px;font-size:13px;transform:scaleX(1.0382);color:#e4e6ec;">to</span>
<span class="t" style="left:682.81px;top:379px;font-size:13px;transform:scaleX(1.0958);color:#e4e6ec;">invite</span>
<span class="t" style="left:720.42px;top:379px;font-size:13px;transform:scaleX(1.0407);color:#e4e6ec;">you</span>
<span class="t" style="left:746.55px;top:379px;font-size:13px;transform:scaleX(1.0481);color:#e4e6ec;">to</span>
<span class="t" style="left:762.27px;top:379px;font-size:13px;transform:scaleX(1.0641);color:#e4e6ec;">our</span>
<span class="t" style="left:786.41px;top:379px;font-size:13px;transform:scaleX(1.1351);color:#e4e6ec;">upcoming</span>
<span class="t" style="left:854.53px;top:379px;font-size:13px;transform:scaleX(1.1415);color:#e4e6ec;">campaign.</span>
<span class="t" style="left:1019.07px;top:379px;font-size:13px;transform:scaleX(1.0713);color:#e4e6ec;">&lt;!doctype</span>
<span class="t" style="left:1083.9px;top:379px;font-size:13px;transform:scaleX(1.0576);color:#e4e6ec;">html&gt;</span>
<span class="t" style="left:1122.22px;top:379px;font-size:13px;transform:scaleX(0.9925);color:#e4e6ec;">&lt;html&gt;</span>
<span class="t" style="left:1166.41px;top:379px;font-size:13px;transform:scaleX(1.0012);color:#e4e6ec;">&lt;head&gt;</span>
<span class="t" style="left:1215.19px;top:379px;font-size:13px;transform:scaleX(1.0425);color:#e4e6ec;">&lt;meta</span>
<span class="t" style="left:1258.16px;top:379px;font-size:13px;transform:scaleX(1.0719);color:#e4e6ec;">charset="utf-8"&gt;</span>
<span class="t" style="left:1362.39px;top:379px;font-size:13px;transform:scaleX(1.0425);color:#e4e6ec;">&lt;meta</span>
<span class="t" style="left:1405.02px;top:379px;font-size:13px;transform:scaleX(1.0805);color:#e4e6ec;">name="viewport"</span>
<span class="t" style="left:1514.55px;top:379px;font-size:13px;transform:scaleX(1.1076);color:#e4e6ec;">content="w</span>
<i class="clip" style="top:380px"></i>
<span class="t" style="left:10.11px;top:416px;font-size:13px;letter-spacing:-1.219px;transform:scaleX(0.9);color:#e4e6ec;">11</span>
<span class="t" style="left:46.75px;top:416px;font-size:13px;transform:scaleX(1.1025);color:#e4e6ec;">noreply@dlms.com</span>
<span class="t" style="left:242.57px;top:416px;font-size:13px;transform:scaleX(1.1574);color:#e4e6ec;">dlms</span>
<span class="t" style="left:363.6px;top:416px;font-size:13px;transform:scaleX(1.0968);color:#e4e6ec;">om.javheri.dreams@gmail.com</span>
<span class="t" style="left:581.3px;top:416px;font-size:13px;transform:scaleX(1.0032);color:#e4e6ec;">We’re</span>
<span class="t" style="left:619.06px;top:416px;font-size:13px;transform:scaleX(1.0873);color:#e4e6ec;">excited</span>
<span class="t" style="left:667.55px;top:416px;font-size:13px;transform:scaleX(1.0382);color:#e4e6ec;">to</span>
<span class="t" style="left:682.81px;top:416px;font-size:13px;transform:scaleX(1.0958);color:#e4e6ec;">invite</span>
<span class="t" style="left:720.42px;top:416px;font-size:13px;transform:scaleX(1.0407);color:#e4e6ec;">you</span>
<span class="t" style="left:746.55px;top:416px;font-size:13px;transform:scaleX(1.0481);color:#e4e6ec;">to</span>
<span class="t" style="left:762.27px;top:416px;font-size:13px;transform:scaleX(1.0641);color:#e4e6ec;">our</span>
<span class="t" style="left:786.41px;top:416px;font-size:13px;transform:scaleX(1.1351);color:#e4e6ec;">upcoming</span>
<span class="t" style="left:854.53px;top:416px;font-size:13px;transform:scaleX(1.1415);color:#e4e6ec;">campaign.</span>
<span class="t" style="left:1019.07px;top:416px;font-size:13px;transform:scaleX(1.0713);color:#e4e6ec;">&lt;!doctype</span>
<span class="t" style="left:1083.9px;top:416px;font-size:13px;transform:scaleX(1.0576);color:#e4e6ec;">html&gt;</span>
<span class="t" style="left:1122.22px;top:416px;font-size:13px;transform:scaleX(0.9925);color:#e4e6ec;">&lt;html&gt;</span>
<span class="t" style="left:1166.41px;top:416px;font-size:13px;transform:scaleX(1.0012);color:#e4e6ec;">&lt;head&gt;</span>
<span class="t" style="left:1215.19px;top:416px;font-size:13px;transform:scaleX(1.0425);color:#e4e6ec;">&lt;meta</span>
<span class="t" style="left:1258.16px;top:416px;font-size:13px;transform:scaleX(1.0719);color:#e4e6ec;">charset="utf-8"&gt;</span>
<span class="t" style="left:1362.39px;top:416px;font-size:13px;transform:scaleX(1.0425);color:#e4e6ec;">&lt;meta</span>
<span class="t" style="left:1405.02px;top:416px;font-size:13px;transform:scaleX(1.0805);color:#e4e6ec;">name="viewport"</span>
<span class="t" style="left:1514.55px;top:416px;font-size:13px;transform:scaleX(1.1076);color:#e4e6ec;">content="w</span>
<i class="clip" style="top:417px"></i>
<span class="t" style="left:10.11px;top:453px;font-size:13px;transform:scaleX(0.9042);color:#e4e6ec;">12</span>
<span class="t" style="left:46.75px;top:453px;font-size:13px;transform:scaleX(1.1025);color:#e4e6ec;">noreply@dlms.com</span>
<span class="t" style="left:242.57px;top:453px;font-size:13px;transform:scaleX(1.1574);color:#e4e6ec;">dlms</span>
<span class="t" style="left:364.55px;top:453px;font-size:13px;transform:scaleX(1.0839);color:#e4e6ec;">javheri.om2003@gmail.com</span>
<span class="t" style="left:581.3px;top:453px;font-size:13px;transform:scaleX(1.0032);color:#e4e6ec;">We’re</span>
<span class="t" style="left:619.06px;top:453px;font-size:13px;transform:scaleX(1.0873);color:#e4e6ec;">excited</span>
<span class="t" style="left:667.55px;top:453px;font-size:13px;transform:scaleX(1.0382);color:#e4e6ec;">to</span>
<span class="t" style="left:682.81px;top:453px;font-size:13px;transform:scaleX(1.0958);color:#e4e6ec;">invite</span>
<span class="t" style="left:720.42px;top:453px;font-size:13px;transform:scaleX(1.0407);color:#e4e6ec;">you</span>
<span class="t" style="left:746.55px;top:453px;font-size:13px;transform:scaleX(1.0481);color:#e4e6ec;">to</span>
<span class="t" style="left:762.27px;top:453px;font-size:13px;transform:scaleX(1.0641);color:#e4e6ec;">our</span>
<span class="t" style="left:786.41px;top:453px;font-size:13px;transform:scaleX(1.1351);color:#e4e6ec;">upcoming</span>
<span class="t" style="left:854.53px;top:453px;font-size:13px;transform:scaleX(1.1415);color:#e4e6ec;">campaign.</span>
<span class="t" style="left:1019.07px;top:453px;font-size:13px;transform:scaleX(1.0713);color:#e4e6ec;">&lt;!doctype</span>
<span class="t" style="left:1083.9px;top:453px;font-size:13px;transform:scaleX(1.0576);color:#e4e6ec;">html&gt;</span>
<span class="t" style="left:1122.22px;top:453px;font-size:13px;transform:scaleX(0.9925);color:#e4e6ec;">&lt;html&gt;</span>
<span class="t" style="left:1166.41px;top:453px;font-size:13px;transform:scaleX(1.0012);color:#e4e6ec;">&lt;head&gt;</span>
<span class="t" style="left:1215.19px;top:453px;font-size:13px;transform:scaleX(1.0425);color:#e4e6ec;">&lt;meta</span>
<span class="t" style="left:1258.16px;top:453px;font-size:13px;transform:scaleX(1.0719);color:#e4e6ec;">charset="utf-8"&gt;</span>
<span class="t" style="left:1362.39px;top:453px;font-size:13px;transform:scaleX(1.0425);color:#e4e6ec;">&lt;meta</span>
<span class="t" style="left:1405.02px;top:453px;font-size:13px;transform:scaleX(1.0805);color:#e4e6ec;">name="viewport"</span>
<span class="t" style="left:1514.55px;top:453px;font-size:13px;transform:scaleX(1.1076);color:#e4e6ec;">content="w</span>
<i class="clip" style="top:454px"></i>
<span class="t" style="left:10.11px;top:490px;font-size:13px;letter-spacing:-0.031px;transform:scaleX(0.9);color:#e4e6ec;">13</span>
<span class="t" style="left:46.75px;top:490px;font-size:13px;transform:scaleX(1.1025);color:#e4e6ec;">noreply@dlms.com</span>
<span class="t" style="left:242.57px;top:490px;font-size:13px;transform:scaleX(1.1574);color:#e4e6ec;">dlms</span>
<span class="t" style="left:363.6px;top:490px;font-size:13px;transform:scaleX(1.0968);color:#e4e6ec;">om.javheri.dreams@gmail.com</span>
<span class="t" style="left:581.3px;top:490px;font-size:13px;transform:scaleX(1.0032);color:#e4e6ec;">We’re</span>
<span class="t" style="left:619.06px;top:490px;font-size:13px;transform:scaleX(1.0873);color:#e4e6ec;">excited</span>
<span class="t" style="left:667.55px;top:490px;font-size:13px;transform:scaleX(1.0382);color:#e4e6ec;">to</span>
<span class="t" style="left:682.81px;top:490px;font-size:13px;transform:scaleX(1.0958);color:#e4e6ec;">invite</span>
<span class="t" style="left:720.42px;top:490px;font-size:13px;transform:scaleX(1.0407);color:#e4e6ec;">you</span>
<span class="t" style="left:746.55px;top:490px;font-size:13px;transform:scaleX(1.0481);color:#e4e6ec;">to</span>
<span class="t" style="left:762.27px;top:490px;font-size:13px;transform:scaleX(1.0641);color:#e4e6ec;">our</span>
<span class="t" style="left:786.41px;top:490px;font-size:13px;transform:scaleX(1.1351);color:#e4e6ec;">upcoming</span>
<span class="t" style="left:854.53px;top:490px;font-size:13px;transform:scaleX(1.1415);color:#e4e6ec;">campaign.</span>
<span class="t" style="left:1019.07px;top:490px;font-size:13px;transform:scaleX(1.0713);color:#e4e6ec;">&lt;!doctype</span>
<span class="t" style="left:1083.9px;top:490px;font-size:13px;transform:scaleX(1.0576);color:#e4e6ec;">html&gt;</span>
<span class="t" style="left:1122.22px;top:490px;font-size:13px;transform:scaleX(0.9925);color:#e4e6ec;">&lt;html&gt;</span>
<span class="t" style="left:1166.41px;top:490px;font-size:13px;transform:scaleX(1.0012);color:#e4e6ec;">&lt;head&gt;</span>
<span class="t" style="left:1215.19px;top:490px;font-size:13px;transform:scaleX(1.0425);color:#e4e6ec;">&lt;meta</span>
<span class="t" style="left:1258.16px;top:490px;font-size:13px;transform:scaleX(1.0719);color:#e4e6ec;">charset="utf-8"&gt;</span>
<span class="t" style="left:1362.39px;top:490px;font-size:13px;transform:scaleX(1.0425);color:#e4e6ec;">&lt;meta</span>
<span class="t" style="left:1405.02px;top:490px;font-size:13px;transform:scaleX(1.0805);color:#e4e6ec;">name="viewport"</span>
<span class="t" style="left:1514.55px;top:490px;font-size:13px;transform:scaleX(1.1076);color:#e4e6ec;">content="w</span>
<i class="clip" style="top:491px"></i>
<span class="t" style="left:10.11px;top:526px;font-size:13px;letter-spacing:-0.213px;transform:scaleX(0.9);color:#e4e6ec;">14</span>
<span class="t" style="left:46.75px;top:526px;font-size:13px;transform:scaleX(1.1025);color:#e4e6ec;">noreply@dlms.com</span>
<span class="t" style="left:242.57px;top:526px;font-size:13px;transform:scaleX(1.1574);color:#e4e6ec;">dlms</span>
<span class="t" style="left:364.55px;top:526px;font-size:13px;transform:scaleX(1.0839);color:#e4e6ec;">javheri.om2003@gmail.com</span>
<span class="t" style="left:581.3px;top:526px;font-size:13px;transform:scaleX(1.0032);color:#e4e6ec;">We’re</span>
<span class="t" style="left:619.06px;top:526px;font-size:13px;transform:scaleX(1.0873);color:#e4e6ec;">excited</span>
<span class="t" style="left:667.55px;top:526px;font-size:13px;transform:scaleX(1.0382);color:#e4e6ec;">to</span>
<span class="t" style="left:682.81px;top:526px;font-size:13px;transform:scaleX(1.0958);color:#e4e6ec;">invite</span>
<span class="t" style="left:720.42px;top:526px;font-size:13px;transform:scaleX(1.0407);color:#e4e6ec;">you</span>
<span class="t" style="left:746.55px;top:526px;font-size:13px;transform:scaleX(1.0481);color:#e4e6ec;">to</span>
<span class="t" style="left:762.27px;top:526px;font-size:13px;transform:scaleX(1.0641);color:#e4e6ec;">our</span>
<span class="t" style="left:786.41px;top:526px;font-size:13px;transform:scaleX(1.1351);color:#e4e6ec;">upcoming</span>
<span class="t" style="left:854.53px;top:526px;font-size:13px;transform:scaleX(1.1415);color:#e4e6ec;">campaign.</span>
<span class="t" style="left:1019.07px;top:526px;font-size:13px;transform:scaleX(1.0713);color:#e4e6ec;">&lt;!doctype</span>
<span class="t" style="left:1083.9px;top:526px;font-size:13px;transform:scaleX(1.0576);color:#e4e6ec;">html&gt;</span>
<span class="t" style="left:1122.22px;top:526px;font-size:13px;transform:scaleX(0.9925);color:#e4e6ec;">&lt;html&gt;</span>
<span class="t" style="left:1166.41px;top:526px;font-size:13px;transform:scaleX(1.0012);color:#e4e6ec;">&lt;head&gt;</span>
<span class="t" style="left:1215.19px;top:526px;font-size:13px;transform:scaleX(1.0425);color:#e4e6ec;">&lt;meta</span>
<span class="t" style="left:1258.16px;top:526px;font-size:13px;transform:scaleX(1.0719);color:#e4e6ec;">charset="utf-8"&gt;</span>
<span class="t" style="left:1362.39px;top:526px;font-size:13px;transform:scaleX(1.0425);color:#e4e6ec;">&lt;meta</span>
<span class="t" style="left:1405.02px;top:526px;font-size:13px;transform:scaleX(1.0805);color:#e4e6ec;">name="viewport"</span>
<span class="t" style="left:1514.55px;top:526px;font-size:13px;transform:scaleX(1.1076);color:#e4e6ec;">content="w</span>
<i class="clip" style="top:527px"></i>
<span class="t" style="left:10.11px;top:563px;font-size:13px;letter-spacing:-0.057px;transform:scaleX(0.9);color:#e4e6ec;">15</span>
<span class="t" style="left:46.75px;top:563px;font-size:13px;transform:scaleX(1.1025);color:#e4e6ec;">noreply@dlms.com</span>
<span class="t" style="left:242.57px;top:563px;font-size:13px;transform:scaleX(1.1574);color:#e4e6ec;">dlms</span>
<span class="t" style="left:363.6px;top:563px;font-size:13px;transform:scaleX(1.0968);color:#e4e6ec;">om.javheri.dreams@gmail.com</span>
<span class="t" style="left:581.3px;top:563px;font-size:13px;transform:scaleX(1.0032);color:#e4e6ec;">We’re</span>
<span class="t" style="left:619.06px;top:563px;font-size:13px;transform:scaleX(1.0873);color:#e4e6ec;">excited</span>
<span class="t" style="left:667.55px;top:563px;font-size:13px;transform:scaleX(1.0382);color:#e4e6ec;">to</span>
<span class="t" style="left:682.81px;top:563px;font-size:13px;transform:scaleX(1.0958);color:#e4e6ec;">invite</span>
<span class="t" style="left:720.42px;top:563px;font-size:13px;transform:scaleX(1.0407);color:#e4e6ec;">you</span>
<span class="t" style="left:746.55px;top:563px;font-size:13px;transform:scaleX(1.0481);color:#e4e6ec;">to</span>
<span class="t" style="left:762.27px;top:563px;font-size:13px;transform:scaleX(1.0641);color:#e4e6ec;">our</span>
<span class="t" style="left:786.41px;top:563px;font-size:13px;transform:scaleX(1.1351);color:#e4e6ec;">upcoming</span>
<span class="t" style="left:854.53px;top:563px;font-size:13px;transform:scaleX(1.1415);color:#e4e6ec;">campaign.</span>
<span class="t" style="left:1019.07px;top:563px;font-size:13px;transform:scaleX(1.0713);color:#e4e6ec;">&lt;!doctype</span>
<span class="t" style="left:1083.9px;top:563px;font-size:13px;transform:scaleX(1.0576);color:#e4e6ec;">html&gt;</span>
<span class="t" style="left:1122.22px;top:563px;font-size:13px;transform:scaleX(0.9925);color:#e4e6ec;">&lt;html&gt;</span>
<span class="t" style="left:1166.41px;top:563px;font-size:13px;transform:scaleX(1.0012);color:#e4e6ec;">&lt;head&gt;</span>
<span class="t" style="left:1215.19px;top:563px;font-size:13px;transform:scaleX(1.0425);color:#e4e6ec;">&lt;meta</span>
<span class="t" style="left:1258.16px;top:563px;font-size:13px;transform:scaleX(1.0719);color:#e4e6ec;">charset="utf-8"&gt;</span>
<span class="t" style="left:1362.39px;top:563px;font-size:13px;transform:scaleX(1.0425);color:#e4e6ec;">&lt;meta</span>
<span class="t" style="left:1405.02px;top:563px;font-size:13px;transform:scaleX(1.0805);color:#e4e6ec;">name="viewport"</span>
<span class="t" style="left:1514.55px;top:563px;font-size:13px;transform:scaleX(1.1076);color:#e4e6ec;">content="w</span>
<i class="clip" style="top:564px"></i>
<span class="t" style="left:10.11px;top:600px;font-size:13px;letter-spacing:-0.031px;transform:scaleX(0.9);color:#e4e6ec;">16</span>
<span class="t" style="left:46.75px;top:600px;font-size:13px;transform:scaleX(1.1025);color:#e4e6ec;">noreply@dlms.com</span>
<span class="t" style="left:242.57px;top:600px;font-size:13px;transform:scaleX(1.1574);color:#e4e6ec;">dlms</span>
<span class="t" style="left:363.6px;top:600px;font-size:13px;transform:scaleX(1.0968);color:#e4e6ec;">om.javheri.dreams@gmail.com</span>
<span class="t" style="left:581.3px;top:600px;font-size:13px;transform:scaleX(1.0032);color:#e4e6ec;">We’re</span>
<span class="t" style="left:619.06px;top:600px;font-size:13px;transform:scaleX(1.0873);color:#e4e6ec;">excited</span>
<span class="t" style="left:667.55px;top:600px;font-size:13px;transform:scaleX(1.0382);color:#e4e6ec;">to</span>
<span class="t" style="left:682.81px;top:600px;font-size:13px;transform:scaleX(1.0958);color:#e4e6ec;">invite</span>
<span class="t" style="left:720.42px;top:600px;font-size:13px;transform:scaleX(1.0407);color:#e4e6ec;">you</span>
<span class="t" style="left:746.55px;top:600px;font-size:13px;transform:scaleX(1.0481);color:#e4e6ec;">to</span>
<span class="t" style="left:762.27px;top:600px;font-size:13px;transform:scaleX(1.0641);color:#e4e6ec;">our</span>
<span class="t" style="left:786.41px;top:600px;font-size:13px;transform:scaleX(1.1351);color:#e4e6ec;">upcoming</span>
<span class="t" style="left:854.53px;top:600px;font-size:13px;transform:scaleX(1.1415);color:#e4e6ec;">campaign.</span>
<span class="t" style="left:1019.07px;top:600px;font-size:13px;transform:scaleX(1.0713);color:#e4e6ec;">&lt;!doctype</span>
<span class="t" style="left:1083.9px;top:600px;font-size:13px;transform:scaleX(1.0576);color:#e4e6ec;">html&gt;</span>
<span class="t" style="left:1122.22px;top:600px;font-size:13px;transform:scaleX(0.9925);color:#e4e6ec;">&lt;html&gt;</span>
<span class="t" style="left:1166.41px;top:600px;font-size:13px;transform:scaleX(1.0012);color:#e4e6ec;">&lt;head&gt;</span>
<span class="t" style="left:1215.19px;top:600px;font-size:13px;transform:scaleX(1.0425);color:#e4e6ec;">&lt;meta</span>
<span class="t" style="left:1258.16px;top:600px;font-size:13px;transform:scaleX(1.0719);color:#e4e6ec;">charset="utf-8"&gt;</span>
<span class="t" style="left:1362.39px;top:600px;font-size:13px;transform:scaleX(1.0425);color:#e4e6ec;">&lt;meta</span>
<span class="t" style="left:1405.02px;top:600px;font-size:13px;transform:scaleX(1.0805);color:#e4e6ec;">name="viewport"</span>
<span class="t" style="left:1514.55px;top:600px;font-size:13px;transform:scaleX(1.1076);color:#e4e6ec;">content="w</span>
<i class="clip" style="top:601px"></i>
<span class="t" style="left:10.11px;top:637px;font-size:13px;transform:scaleX(0.9042);color:#e4e6ec;">17</span>
<span class="t" style="left:46.75px;top:637px;font-size:13px;transform:scaleX(1.1025);color:#e4e6ec;">noreply@dlms.com</span>
<span class="t" style="left:242.57px;top:637px;font-size:13px;transform:scaleX(1.1574);color:#e4e6ec;">dlms</span>
<span class="t" style="left:363.6px;top:637px;font-size:13px;transform:scaleX(1.0968);color:#e4e6ec;">om.javheri.dreams@gmail.com</span>
<span class="t" style="left:581.3px;top:637px;font-size:13px;transform:scaleX(1.0032);color:#e4e6ec;">We’re</span>
<span class="t" style="left:619.06px;top:637px;font-size:13px;transform:scaleX(1.0873);color:#e4e6ec;">excited</span>
<span class="t" style="left:667.55px;top:637px;font-size:13px;transform:scaleX(1.0382);color:#e4e6ec;">to</span>
<span class="t" style="left:682.81px;top:637px;font-size:13px;transform:scaleX(1.0958);color:#e4e6ec;">invite</span>
<span class="t" style="left:720.42px;top:637px;font-size:13px;transform:scaleX(1.0407);color:#e4e6ec;">you</span>
<span class="t" style="left:746.55px;top:637px;font-size:13px;transform:scaleX(1.0481);color:#e4e6ec;">to</span>
<span class="t" style="left:762.27px;top:637px;font-size:13px;transform:scaleX(1.0641);color:#e4e6ec;">our</span>
<span class="t" style="left:786.41px;top:637px;font-size:13px;transform:scaleX(1.1351);color:#e4e6ec;">upcoming</span>
<span class="t" style="left:854.53px;top:637px;font-size:13px;transform:scaleX(1.1415);color:#e4e6ec;">campaign.</span>
<span class="t" style="left:1019.07px;top:637px;font-size:13px;transform:scaleX(1.0713);color:#e4e6ec;">&lt;!doctype</span>
<span class="t" style="left:1083.9px;top:637px;font-size:13px;transform:scaleX(1.0576);color:#e4e6ec;">html&gt;</span>
<span class="t" style="left:1122.22px;top:637px;font-size:13px;transform:scaleX(0.9925);color:#e4e6ec;">&lt;html&gt;</span>
<span class="t" style="left:1166.41px;top:637px;font-size:13px;transform:scaleX(1.0012);color:#e4e6ec;">&lt;head&gt;</span>
<span class="t" style="left:1215.19px;top:637px;font-size:13px;transform:scaleX(1.0425);color:#e4e6ec;">&lt;meta</span>
<span class="t" style="left:1258.16px;top:637px;font-size:13px;transform:scaleX(1.0719);color:#e4e6ec;">charset="utf-8"&gt;</span>
<span class="t" style="left:1362.39px;top:637px;font-size:13px;transform:scaleX(1.0425);color:#e4e6ec;">&lt;meta</span>
<span class="t" style="left:1405.02px;top:637px;font-size:13px;transform:scaleX(1.0805);color:#e4e6ec;">name="viewport"</span>
<span class="t" style="left:1514.55px;top:637px;font-size:13px;transform:scaleX(1.1076);color:#e4e6ec;">content="w</span>
<i class="clip" style="top:638px"></i>
<span class="t" style="left:10.11px;top:674px;font-size:13px;letter-spacing:-0.031px;transform:scaleX(0.9);color:#e4e6ec;">18</span>
<span class="t" style="left:46.75px;top:674px;font-size:13px;transform:scaleX(1.1025);color:#e4e6ec;">noreply@dlms.com</span>
<span class="t" style="left:242.57px;top:674px;font-size:13px;transform:scaleX(1.1574);color:#e4e6ec;">dlms</span>
<span class="t" style="left:363.6px;top:674px;font-size:13px;transform:scaleX(1.0968);color:#e4e6ec;">om.javheri.dreams@gmail.com</span>
<span class="t" style="left:581.3px;top:674px;font-size:13px;transform:scaleX(1.0032);color:#e4e6ec;">We’re</span>
<span class="t" style="left:619.06px;top:674px;font-size:13px;transform:scaleX(1.0873);color:#e4e6ec;">excited</span>
<span class="t" style="left:667.55px;top:674px;font-size:13px;transform:scaleX(1.0382);color:#e4e6ec;">to</span>
<span class="t" style="left:682.81px;top:674px;font-size:13px;transform:scaleX(1.0958);color:#e4e6ec;">invite</span>
<span class="t" style="left:720.42px;top:674px;font-size:13px;transform:scaleX(1.0407);color:#e4e6ec;">you</span>
<span class="t" style="left:746.55px;top:674px;font-size:13px;transform:scaleX(1.0481);color:#e4e6ec;">to</span>
<span class="t" style="left:762.27px;top:674px;font-size:13px;transform:scaleX(1.0641);color:#e4e6ec;">our</span>
<span class="t" style="left:786.41px;top:674px;font-size:13px;transform:scaleX(1.1351);color:#e4e6ec;">upcoming</span>
<span class="t" style="left:854.53px;top:674px;font-size:13px;transform:scaleX(1.1415);color:#e4e6ec;">campaign.</span>
<span class="t" style="left:1019.07px;top:674px;font-size:13px;transform:scaleX(1.0713);color:#e4e6ec;">&lt;!doctype</span>
<span class="t" style="left:1083.9px;top:674px;font-size:13px;transform:scaleX(1.0576);color:#e4e6ec;">html&gt;</span>
<span class="t" style="left:1122.22px;top:674px;font-size:13px;transform:scaleX(0.9925);color:#e4e6ec;">&lt;html&gt;</span>
<span class="t" style="left:1166.41px;top:674px;font-size:13px;transform:scaleX(1.0012);color:#e4e6ec;">&lt;head&gt;</span>
<span class="t" style="left:1215.19px;top:674px;font-size:13px;transform:scaleX(1.0425);color:#e4e6ec;">&lt;meta</span>
<span class="t" style="left:1258.16px;top:674px;font-size:13px;transform:scaleX(1.0719);color:#e4e6ec;">charset="utf-8"&gt;</span>
<span class="t" style="left:1362.39px;top:674px;font-size:13px;transform:scaleX(1.0425);color:#e4e6ec;">&lt;meta</span>
<span class="t" style="left:1405.02px;top:674px;font-size:13px;transform:scaleX(1.0805);color:#e4e6ec;">name="viewport"</span>
<span class="t" style="left:1514.55px;top:674px;font-size:13px;transform:scaleX(1.1076);color:#e4e6ec;">content="w</span>
<i class="clip" style="top:675px"></i>
<span class="t" style="left:10.11px;top:711px;font-size:13px;transform:scaleX(0.9015);color:#e4e6ec;">19</span>
<span class="t" style="left:46.75px;top:711px;font-size:13px;transform:scaleX(1.1025);color:#e4e6ec;">noreply@dlms.com</span>
<span class="t" style="left:242.57px;top:711px;font-size:13px;transform:scaleX(1.1574);color:#e4e6ec;">dlms</span>
<span class="t" style="left:363.6px;top:711px;font-size:13px;transform:scaleX(1.0968);color:#e4e6ec;">om.javheri.dreams@gmail.com</span>
<span class="t" style="left:581.3px;top:711px;font-size:13px;transform:scaleX(1.0032);color:#e4e6ec;">We’re</span>
<span class="t" style="left:619.06px;top:711px;font-size:13px;transform:scaleX(1.0873);color:#e4e6ec;">excited</span>
<span class="t" style="left:667.55px;top:711px;font-size:13px;transform:scaleX(1.0382);color:#e4e6ec;">to</span>
<span class="t" style="left:682.81px;top:711px;font-size:13px;transform:scaleX(1.0958);color:#e4e6ec;">invite</span>
<span class="t" style="left:720.42px;top:711px;font-size:13px;transform:scaleX(1.0407);color:#e4e6ec;">you</span>
<span class="t" style="left:746.55px;top:711px;font-size:13px;transform:scaleX(1.0481);color:#e4e6ec;">to</span>
<span class="t" style="left:762.27px;top:711px;font-size:13px;transform:scaleX(1.0641);color:#e4e6ec;">our</span>
<span class="t" style="left:786.41px;top:711px;font-size:13px;transform:scaleX(1.1351);color:#e4e6ec;">upcoming</span>
<span class="t" style="left:854.53px;top:711px;font-size:13px;transform:scaleX(1.1415);color:#e4e6ec;">campaign.</span>
<span class="t" style="left:1019.07px;top:711px;font-size:13px;transform:scaleX(1.0713);color:#e4e6ec;">&lt;!doctype</span>
<span class="t" style="left:1083.9px;top:711px;font-size:13px;transform:scaleX(1.0576);color:#e4e6ec;">html&gt;</span>
<span class="t" style="left:1122.22px;top:711px;font-size:13px;transform:scaleX(0.9925);color:#e4e6ec;">&lt;html&gt;</span>
<span class="t" style="left:1166.41px;top:711px;font-size:13px;transform:scaleX(1.0012);color:#e4e6ec;">&lt;head&gt;</span>
<span class="t" style="left:1215.19px;top:711px;font-size:13px;transform:scaleX(1.0425);color:#e4e6ec;">&lt;meta</span>
<span class="t" style="left:1258.16px;top:711px;font-size:13px;transform:scaleX(1.0719);color:#e4e6ec;">charset="utf-8"&gt;</span>
<span class="t" style="left:1362.39px;top:711px;font-size:13px;transform:scaleX(1.0425);color:#e4e6ec;">&lt;meta</span>
<span class="t" style="left:1405.02px;top:711px;font-size:13px;transform:scaleX(1.0805);color:#e4e6ec;">name="viewport"</span>
<span class="t" style="left:1514.55px;top:711px;font-size:13px;transform:scaleX(1.1076);color:#e4e6ec;">content="w</span>
<i class="clip" style="top:712px"></i>
<span class="t" style="left:10.28px;top:748px;font-size:13px;transform:scaleX(1.1034);color:#e4e6ec;">20</span>
<span class="t" style="left:46.75px;top:748px;font-size:13px;transform:scaleX(1.1025);color:#e4e6ec;">noreply@dlms.com</span>
<span class="t" style="left:242.57px;top:748px;font-size:13px;transform:scaleX(1.1574);color:#e4e6ec;">dlms</span>
<span class="t" style="left:363.6px;top:748px;font-size:13px;transform:scaleX(1.0968);color:#e4e6ec;">om.javheri.dreams@gmail.com</span>
<span class="t" style="left:581.3px;top:748px;font-size:13px;transform:scaleX(1.0032);color:#e4e6ec;">We’re</span>
<span class="t" style="left:619.06px;top:748px;font-size:13px;transform:scaleX(1.0873);color:#e4e6ec;">excited</span>
<span class="t" style="left:667.55px;top:748px;font-size:13px;transform:scaleX(1.0382);color:#e4e6ec;">to</span>
<span class="t" style="left:682.81px;top:748px;font-size:13px;transform:scaleX(1.0958);color:#e4e6ec;">invite</span>
<span class="t" style="left:720.42px;top:748px;font-size:13px;transform:scaleX(1.0407);color:#e4e6ec;">you</span>
<span class="t" style="left:746.55px;top:748px;font-size:13px;transform:scaleX(1.0481);color:#e4e6ec;">to</span>
<span class="t" style="left:762.27px;top:748px;font-size:13px;transform:scaleX(1.0641);color:#e4e6ec;">our</span>
<span class="t" style="left:786.41px;top:748px;font-size:13px;transform:scaleX(1.1351);color:#e4e6ec;">upcoming</span>
<span class="t" style="left:854.53px;top:748px;font-size:13px;transform:scaleX(1.1415);color:#e4e6ec;">campaign.</span>
<span class="t" style="left:1019.07px;top:748px;font-size:13px;transform:scaleX(1.0713);color:#e4e6ec;">&lt;!doctype</span>
<span class="t" style="left:1083.9px;top:748px;font-size:13px;transform:scaleX(1.0576);color:#e4e6ec;">html&gt;</span>
<span class="t" style="left:1122.22px;top:748px;font-size:13px;transform:scaleX(0.9925);color:#e4e6ec;">&lt;html&gt;</span>
<span class="t" style="left:1166.41px;top:748px;font-size:13px;transform:scaleX(1.0012);color:#e4e6ec;">&lt;head&gt;</span>
<span class="t" style="left:1215.19px;top:748px;font-size:13px;transform:scaleX(1.0425);color:#e4e6ec;">&lt;meta</span>
<span class="t" style="left:1258.16px;top:748px;font-size:13px;transform:scaleX(1.0719);color:#e4e6ec;">charset="utf-8"&gt;</span>
<span class="t" style="left:1362.39px;top:748px;font-size:13px;transform:scaleX(1.0425);color:#e4e6ec;">&lt;meta</span>
<span class="t" style="left:1405.02px;top:748px;font-size:13px;transform:scaleX(1.0805);color:#e4e6ec;">name="viewport"</span>
<span class="t" style="left:1514.55px;top:748px;font-size:13px;transform:scaleX(1.1076);color:#e4e6ec;">content="w</span>
<i class="clip" style="top:749px"></i>
<span class="t" style="left:10.41px;top:785px;font-size:13px;letter-spacing:-0.304px;transform:scaleX(0.9);color:#e4e6ec;">21</span>
<span class="t" style="left:46.75px;top:785px;font-size:13px;transform:scaleX(1.1025);color:#e4e6ec;">noreply@dlms.com</span>
<span class="t" style="left:242.57px;top:785px;font-size:13px;transform:scaleX(1.1574);color:#e4e6ec;">dlms</span>
<span class="t" style="left:363.6px;top:785px;font-size:13px;transform:scaleX(1.0968);color:#e4e6ec;">om.javheri.dreams@gmail.com</span>
<span class="t" style="left:581.3px;top:785px;font-size:13px;transform:scaleX(1.0032);color:#e4e6ec;">We’re</span>
<span class="t" style="left:619.06px;top:785px;font-size:13px;transform:scaleX(1.0873);color:#e4e6ec;">excited</span>
<span class="t" style="left:667.55px;top:785px;font-size:13px;transform:scaleX(1.0382);color:#e4e6ec;">to</span>
<span class="t" style="left:682.81px;top:785px;font-size:13px;transform:scaleX(1.0958);color:#e4e6ec;">invite</span>
<span class="t" style="left:720.42px;top:785px;font-size:13px;transform:scaleX(1.0407);color:#e4e6ec;">you</span>
<span class="t" style="left:746.55px;top:785px;font-size:13px;transform:scaleX(1.0481);color:#e4e6ec;">to</span>
<span class="t" style="left:762.27px;top:785px;font-size:13px;transform:scaleX(1.0641);color:#e4e6ec;">our</span>
<span class="t" style="left:786.41px;top:785px;font-size:13px;transform:scaleX(1.1351);color:#e4e6ec;">upcoming</span>
<span class="t" style="left:854.53px;top:785px;font-size:13px;transform:scaleX(1.1415);color:#e4e6ec;">campaign.</span>
<span class="t" style="left:1019.07px;top:785px;font-size:13px;transform:scaleX(1.0713);color:#e4e6ec;">&lt;!doctype</span>
<span class="t" style="left:1083.9px;top:785px;font-size:13px;transform:scaleX(1.0576);color:#e4e6ec;">html&gt;</span>
<span class="t" style="left:1122.22px;top:785px;font-size:13px;transform:scaleX(0.9925);color:#e4e6ec;">&lt;html&gt;</span>
<span class="t" style="left:1166.41px;top:785px;font-size:13px;transform:scaleX(1.0012);color:#e4e6ec;">&lt;head&gt;</span>
<span class="t" style="left:1215.19px;top:785px;font-size:13px;transform:scaleX(1.0425);color:#e4e6ec;">&lt;meta</span>
<span class="t" style="left:1258.16px;top:785px;font-size:13px;transform:scaleX(1.0719);color:#e4e6ec;">charset="utf-8"&gt;</span>
<span class="t" style="left:1362.39px;top:785px;font-size:13px;transform:scaleX(1.0425);color:#e4e6ec;">&lt;meta</span>
<span class="t" style="left:1405.02px;top:785px;font-size:13px;transform:scaleX(1.0805);color:#e4e6ec;">name="viewport"</span>
<span class="t" style="left:1514.55px;top:785px;font-size:13px;transform:scaleX(1.1076);color:#e4e6ec;">content="w</span>
<i class="clip" style="top:786px"></i>
</div>
<div id="vsb"><i class="up"></i><b></b><i class="dn"></i></div>
<div id="hsb"><i class="lf"></i><b></b><i class="rt"></i></div>
<div id="footline"></div>
<span class="t md" style="left:319.72px;top:1025px;font-size:13.7px;transform:scaleX(1.1382);color:#f1f5f9;">Per Page</span>
<div class="box" style="left:391px;top:1016px;width:41px;height:38px;border-radius:12px"></div>
<span class="t md" style="left:402.58px;top:1024px;font-size:14.5px;transform:scaleX(1.1337);color:#f1f5f9;">25</span>
<span class="t" style="left:815.34px;top:1025px;font-size:13px;transform:scaleX(0.9767);color:#e2e8f0;">1–25, of 166 Records</span>
<div class="pb pd" style="left:944px"></div>
<svg style="left:954px;top:1027px;color:#4b5563;" width="16" height="16" viewBox="0 0 24 24" fill="none" stroke="currentColor" stroke-width="1.6" stroke-linecap="round" stroke-linejoin="round"><path d="M11 7l-5 5l5 5"/><path d="M17 7l-5 5l5 5"/></svg>
<div class="pb pd" style="left:987px"></div>
<svg style="left:997px;top:1027px;color:#4b5563;" width="16" height="16" viewBox="0 0 24 24" fill="none" stroke="currentColor" stroke-width="1.6" stroke-linecap="round" stroke-linejoin="round"><path d="M15 6l-6 6l6 6"/></svg>
<div class="pb pa" style="left:1030px"></div>
<span class="t md" style="left:1043.42px;top:1024px;font-size:14.5px;transform:scaleX(1.08);color:#f8fafc;">1</span>
<div class="pb" style="left:1073px"></div>
<span class="t md" style="left:1086.64px;top:1024px;font-size:14.5px;transform:scaleX(1.08);color:#f8fafc;">2</span>
<div class="pb" style="left:1116px"></div>
<span class="t md" style="left:1129.67px;top:1024px;font-size:14.5px;transform:scaleX(1.08);color:#f8fafc;">3</span>
<span class="t" style="left:1159.57px;top:1019px;font-size:10px;font-weight:700;transform:scaleX(1.088);color:#9aa3b2;">...</span>
<div class="pb" style="left:1176px"></div>
<span class="t md" style="left:1189.64px;top:1024px;font-size:14.5px;transform:scaleX(1.08);color:#f8fafc;">5</span>
<div class="pb" style="left:1219px"></div>
<span class="t md" style="left:1232.59px;top:1024px;font-size:14.5px;transform:scaleX(1.08);color:#f8fafc;">6</span>
<div class="pb" style="left:1262px"></div>
<span class="t md" style="left:1275.63px;top:1024px;font-size:14.5px;transform:scaleX(1.08);color:#f8fafc;">7</span>
<div class="pb" style="left:1305px"></div>
<svg style="left:1315px;top:1027px;color:#cbd5e1;" width="16" height="16" viewBox="0 0 24 24" fill="none" stroke="currentColor" stroke-width="1.6" stroke-linecap="round" stroke-linejoin="round"><path d="M9 6l6 6l-6 6"/></svg>
<div class="pb" style="left:1349px"></div>
<svg style="left:1359px;top:1027px;color:#cbd5e1;" width="16" height="16" viewBox="0 0 24 24" fill="none" stroke="currentColor" stroke-width="1.6" stroke-linecap="round" stroke-linejoin="round"><path d="M7 7l5 5l-5 5"/><path d="M13 7l5 5l-5 5"/></svg>
<span class="t md" style="left:1767.4px;top:1025px;font-size:13.7px;letter-spacing:0.351px;transform:scaleX(1.16);color:#f1f5f9;">Page</span>
<div class="box" style="left:1812px;top:1016px;width:36px;height:38px;border-radius:12px"></div>
<span class="t md" style="left:1825.9px;top:1024px;font-size:14.5px;color:#f1f5f9;">1</span>
<span class="t md" style="left:1853.33px;top:1025px;font-size:13.7px;transform:scaleX(1.1584);color:#f1f5f9;">of 7</span>
</body></html>
